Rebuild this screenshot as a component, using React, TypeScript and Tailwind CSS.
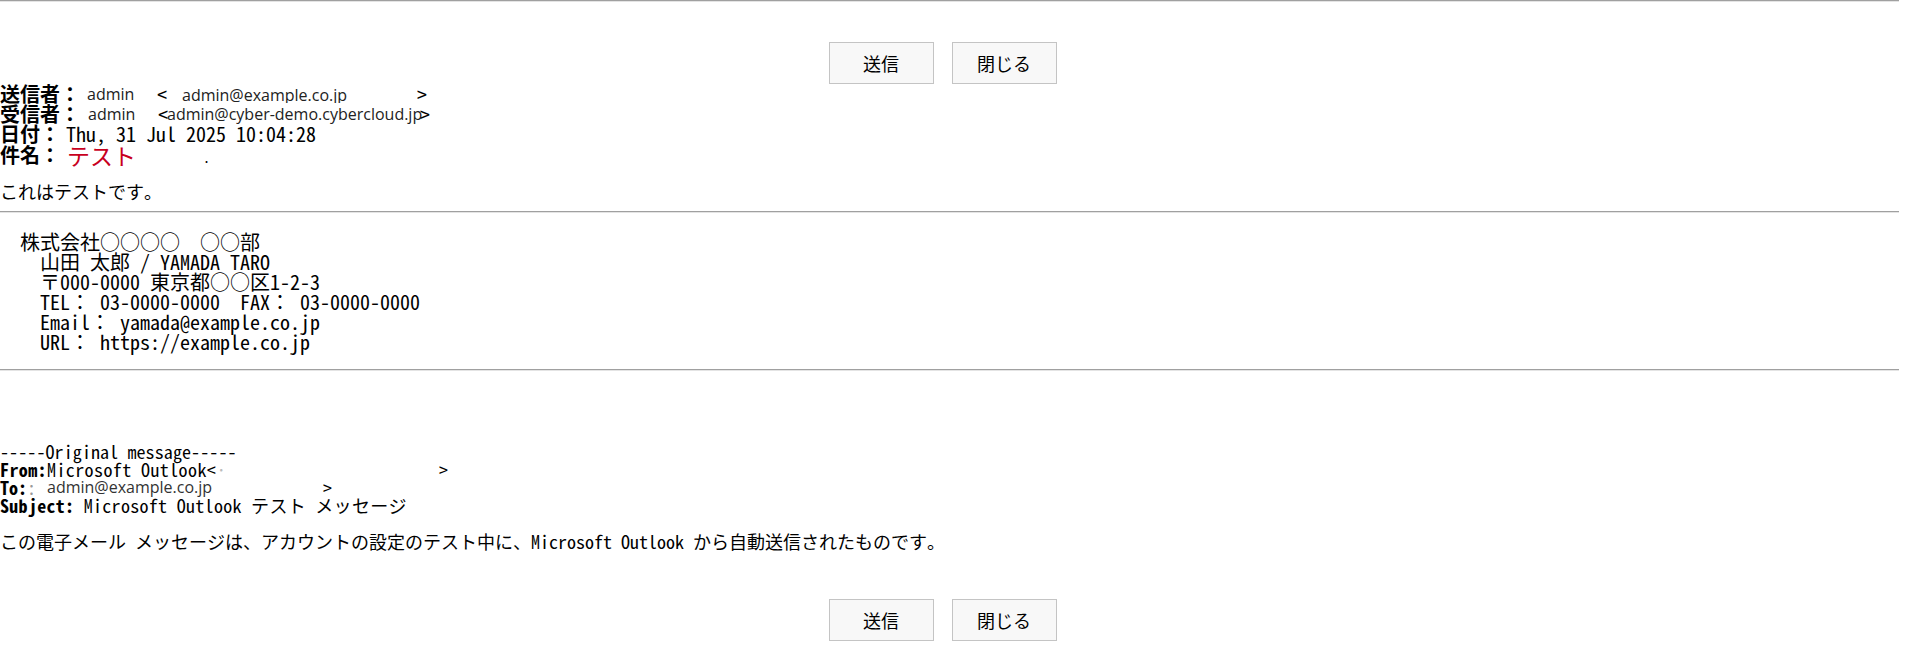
import React from "react";

const mono = "font-['Noto_Sans_Mono_CJK_JP','Noto_Sans_Mono_CJK_SC','Noto_Sans_CJK_JP','Liberation_Mono',monospace]";
const sans = "font-['Open_Sans','Noto_Sans_CJK_JP',sans-serif]";

function Rule() {
  return <div className="h-[2px] border-t border-b border-t-[#a0a0a0] border-b-[#e4e4e4]" />;
}

function Buttons() {
  return (
    <div className="flex justify-center gap-[18px] pr-[14px]">
      <button className="flex h-[42px] w-[105px] items-center justify-center border border-[#c4c4c4] bg-[#f8f8f8] text-[18px] font-['Noto_Sans_CJK_JP',sans-serif] text-black">
        送信
      </button>
      <button className="flex h-[42px] w-[105px] items-center justify-center border border-[#c4c4c4] bg-[#f8f8f8] text-[18px] font-['Noto_Sans_CJK_JP',sans-serif] text-black">
        閉じる
      </button>
    </div>
  );
}

function Header() {
  return (
    <div className="text-[20px] leading-[20px]">
      <div className="flex h-[20px] items-center whitespace-nowrap">
        <span className="w-[80px] shrink-0 font-bold">送信者：</span>
        <span className={`${sans} ml-[7px] w-[70px] shrink-0 text-[16px] leading-[20px] text-[#222]`}>admin</span>
        <span className="w-[25px] shrink-0 font-light">&lt;</span>
        <span className={`${sans} h-[18px] w-[235px] shrink-0 overflow-hidden text-[16px] leading-[20px] text-[#222]`}>admin@example.co.jp</span>
        <span className="font-light">&gt;</span>
      </div>
      <div className="flex h-[20px] items-center whitespace-nowrap">
        <span className="w-[80px] shrink-0 font-bold">受信者：</span>
        <span className={`${sans} ml-[8px] w-[70px] shrink-0 text-[16px] leading-[20px] text-[#222]`}>admin</span>
        <span className="w-[9px] shrink-0 font-light">&lt;</span>
        <span className={`${sans} w-[253px] shrink-0 text-[16px] leading-[20px] text-[#222]`}>admin@cyber-demo.cybercloud.jp</span>
        <span className="font-light">&gt;</span>
      </div>
      <div className="flex h-[20px] items-center whitespace-nowrap">
        <span className="w-[60px] shrink-0 font-bold">日付：</span>
        <span className="ml-[6px]">Thu, 31 Jul 2025 10:04:28</span>
      </div>
      <div className="flex h-[22px] items-center whitespace-nowrap">
        <span className="w-[60px] shrink-0 font-bold">件名：</span>
        <span className="ml-[7px] w-[136px] shrink-0 font-['Noto_Sans_CJK_JP',sans-serif] text-[23px] leading-[22px] text-[#c8001e]">テスト</span>
        <span className="self-end text-[14px] leading-[18px]">.</span>
      </div>
    </div>
  );
}

function Signature() {
  const lines = [
    "  株式会社○○○○　○○部",
    "    山田 太郎 / YAMADA TARO",
    "    〒000-0000 東京都○○区1-2-3",
    "    TEL： 03-0000-0000　FAX： 03-0000-0000",
    "    Email： yamada@example.co.jp",
    "    URL： https://example.co.jp",
  ];
  return (
    <div className="pt-[19px] text-[20px] leading-[20px]">
      {lines.map((l) => (
        <div key={l} className="whitespace-pre">{l}</div>
      ))}
    </div>
  );
}

function Quoted() {
  return (
    <div className="mt-[71px] text-[18px] leading-[18px]">
      <div className="tracking-[0.1px]">-----Original message-----</div>
      <div className="flex whitespace-nowrap tracking-[0.4px]">
        <span className="font-bold">From:</span>
        <span className="w-[196px] shrink-0">Microsoft Outlook&lt;<span className="text-[#bbb]">·</span></span>
        <span className="ml-[196px]">&gt;</span>
      </div>
      <div className="flex items-center whitespace-nowrap">
        <span className="font-bold">To:</span>
        <span className="text-[#999]">:</span>
        <span className={`${sans} ml-[11px] w-[276px] shrink-0 text-[16px] leading-[18px] text-[#333]`}>admin@example.co.jp</span>
        <span>&gt;</span>
      </div>
      <div className="whitespace-pre tracking-[0.3px]">
        <span className="font-bold">Subject:</span> Microsoft Outlook テスト メッセージ
      </div>
      <div className="mt-[18px]">この電子メール メッセージは、アカウントの設定のテスト中に、Microsoft Outlook から自動送信されたものです。</div>
    </div>
  );
}

export default function App() {
  return (
    <div className={`${mono} min-h-[668px] w-[1899px] bg-white text-black`}>
      <Rule />
      <div className="pt-[40px]">
        <Buttons />
      </div>
      <Header />
      <div className="mt-[15px] text-[18px] leading-[20px]">これはテストです。</div>
      <div className="mt-[10px]">
        <Rule />
      </div>
      <Signature />
      <div className="mt-[17px]">
        <Rule />
      </div>
      <Quoted />
      <div className="mt-[49px] pb-[28px]">
        <Buttons />
      </div>
    </div>
  );
}
